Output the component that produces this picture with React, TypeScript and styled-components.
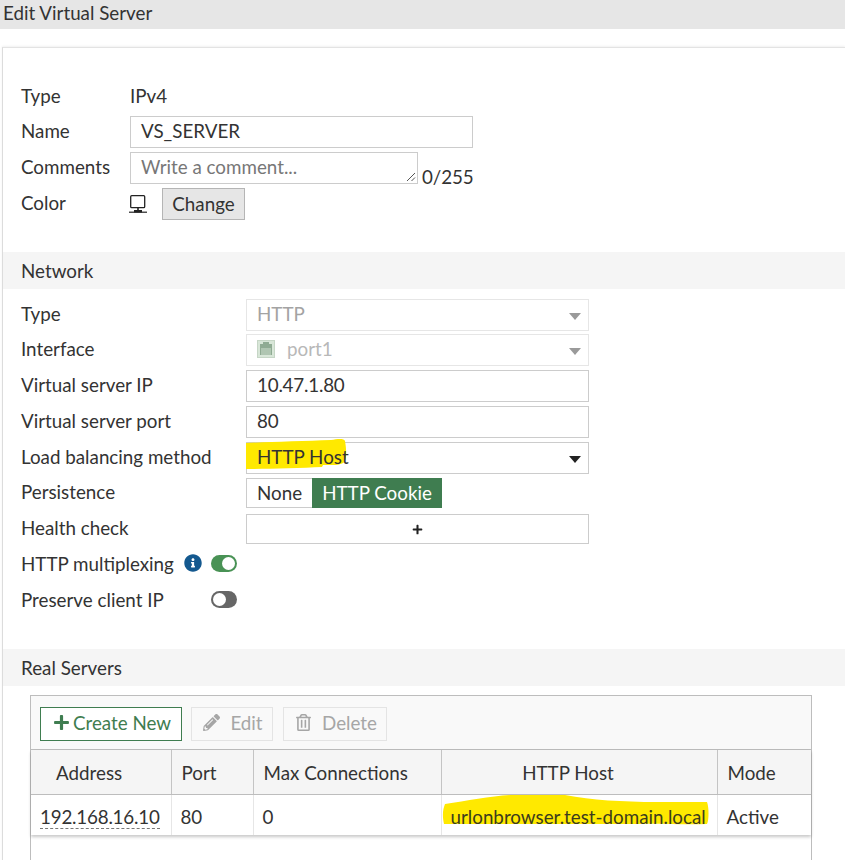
import { ReactNode } from 'react';
import styled, { createGlobalStyle } from 'styled-components';
import { FaInfoCircle, FaPencilAlt, FaPlus, FaRegTrashAlt } from 'react-icons/fa';

const GlobalStyle = createGlobalStyle`
  html, body {
    margin: 0;
    padding: 0;
    background: #fff;
    overflow: hidden;
  }
  body {
    font-family: Lato, "Open Sans", sans-serif;
    font-size: 18.8px;
    color: #333;
  }
  * { box-sizing: border-box; }
`;

const Page = styled.div`
  width: 845px;
  height: 860px;
  overflow: hidden;
`;

const TitleBar = styled.div`
  height: 29px;
  padding-left: 3px;
  background: #e6e6e6;
  line-height: 25px;
  margin-bottom: 18px;
`;

const Panel = styled.div`
  margin-left: 2px;
  border-top: 1px solid #e3e3e3;
  border-left: 1px solid #dcdcdc;
  box-shadow: 0 -1px 2px rgba(0, 0, 0, 0.06);
`;

const Rows = styled.div<{ $top: number; $bottom: number; $gap: number }>`
  display: flex;
  flex-direction: column;
  gap: ${(p) => p.$gap}px;
  padding: ${(p) => p.$top}px 0 ${(p) => p.$bottom}px 18px;
`;

const Row = styled.div<{ $label: number }>`
  display: grid;
  grid-template-columns: ${(p) => p.$label}px 1fr;
  align-items: center;
  height: 32px;
`;

const Label = styled.label`
  display: flex;
  align-items: center;
  padding-bottom: 3px;
  white-space: nowrap;
`;

const StaticLabel = styled(Label)`
  padding-bottom: 1px;
`;

const Value = styled.div`
  display: flex;
  align-items: center;
`;

const SectionHeader = styled.div`
  height: 37px;
  padding-left: 18px;
  background: #f5f5f5;
  line-height: 38px;
`;

const TextBox = styled.div<{ $width: number; $muted?: boolean }>`
  position: relative;
  display: flex;
  align-items: center;
  width: ${(p) => p.$width}px;
  height: 32px;
  padding: 0 10px 3px;
  border: 1px solid ${(p) => (p.$muted ? '#e6e6e6' : '#cccccc')};
  color: ${(p) => (p.$muted ? '#a3a3a3' : '#333')};
  background: #fff;
`;

const Comment = styled(TextBox)`
  color: #777;
`;

const Counter = styled.span`
  margin-left: 4px;
  align-self: flex-end;
  line-height: 20px;
  margin-bottom: -3px;
  letter-spacing: -0.1px;
`;

const Digits = styled.span`
  letter-spacing: -0.2px;
`;

const Grip = styled.svg`
  position: absolute;
  right: 1px;
  bottom: 1px;
  width: 10px;
  height: 10px;
`;

const ChangeButton = styled.div`
  display: flex;
  align-items: center;
  justify-content: center;
  width: 83px;
  height: 32px;
  margin-left: 15px;
  padding-bottom: 1px;
  background: #e6e6e6;
  border: 1px solid #b5b5b5;
`;

const Caret = styled.span<{ $muted?: boolean }>`
  position: absolute;
  right: 7px;
  top: 13px;
  border-left: 6.5px solid transparent;
  border-right: 6.5px solid transparent;
  border-top: 7px solid ${(p) => (p.$muted ? '#9a9a9a' : '#222')};
`;

const PortLabel = styled.span`
  margin-left: 12px;
  color: #b8b8b8;
`;

const Marker = styled.span`
  position: relative;
  z-index: 1;
`;

const HighlightShape = styled.svg`
  position: absolute;
  z-index: 0;
  left: -12px;
  top: -10px;
  width: 106px;
  height: 35px;
`;

const Segments = styled.div`
  display: flex;
  height: 30px;
  border: 1px solid #cccccc;
  border-right: 0;
`;

const Segment = styled.div<{ $active?: boolean }>`
  display: flex;
  align-items: center;
  justify-content: center;
  width: ${(p) => (p.$active ? '130px' : '65px')};
  padding-bottom: 2px;
  background: ${(p) => (p.$active ? '#3f7d50' : '#fff')};
  color: ${(p) => (p.$active ? '#fff' : '#333')};
  margin: ${(p) => (p.$active ? '-1px 0' : '0')};
`;

const AddBox = styled.div`
  display: flex;
  align-items: center;
  justify-content: center;
  width: 343px;
  height: 30px;
  border: 1px solid #cccccc;
  font-size: 11px;
  color: #222;
`;

const InfoIcon = styled(FaInfoCircle)`
  margin-left: 10px;
  font-size: 18px;
  color: #14598f;
`;

const Toggle = styled.span<{ $on?: boolean }>`
  position: absolute;
  left: 190px;
  top: 6px;
  width: 26px;
  height: 17px;
  border-radius: 9px;
  background: ${(p) => (p.$on ? '#499255' : '#666')};

  &::after {
    content: '';
    position: absolute;
    top: 2px;
    left: ${(p) => (p.$on ? '11px' : '2px')};
    width: 13px;
    height: 13px;
    border-radius: 50%;
    background: #fff;
  }
`;

const ToggleRow = styled(Row)`
  position: relative;
`;

const TableFrame = styled.div`
  width: 782px;
  height: 175px;
  margin: 9px 0 0 27px;
  border: 1px solid #bdbdbd;
`;

const Toolbar = styled.div`
  display: flex;
  align-items: center;
  height: 54px;
  padding: 3px 0 0 9px;
  background: #f9f9f9;
  border-bottom: 1px solid #bdbdbd;
`;

const ToolButton = styled.div<{ $width: number; $primary?: boolean }>`
  display: flex;
  align-items: center;
  justify-content: center;
  gap: ${(p) => (p.$primary ? '3px' : '10px')};
  width: ${(p) => p.$width}px;
  height: 34px;
  margin-right: ${(p) => (p.$primary ? '9px' : '10px')};
  padding: 0 0 3px 2px;
  border: 1px solid ${(p) => (p.$primary ? '#3f7d50' : '#e4e4e4')};
  color: ${(p) => (p.$primary ? '#3f7d50' : '#a6a6a6')};
  background: ${(p) => (p.$primary ? '#fff' : 'transparent')};

  svg {
    font-size: 17px;
  }
`;

const Table = styled.table`
  width: 780px;
  table-layout: fixed;
  border-collapse: collapse;
  box-shadow: 0 2px 3px rgba(0, 0, 0, 0.22);
`;

const HeadCell = styled.th<{ $center?: boolean }>`
  height: 45px;
  padding: 0 ${(p) => (p.$center ? '22px' : '0')} 0 ${(p) => (p.$center ? '0' : '10px')};
  background: #f5f5f5;
  border-left: 1px solid #c4c4c4;
  border-bottom: 1px solid #bdbdbd;
  font-weight: 400;
  text-align: ${(p) => (p.$center ? 'center' : 'left')};

  &:first-child {
    border-left: 0;
    padding-left: 25px;
  }
`;

const Cell = styled.td`
  position: relative;
  height: 40px;
  padding: 2px 0 0 9px;
  border-left: 1px solid #e6e6e6;
  white-space: nowrap;

  &:first-child {
    border-left: 0;
  }
`;

const Dotted = styled(Digits)`
  border-bottom: 1px dashed #777;
`;

const HostMark = styled.svg`
  position: absolute;
  left: 0;
  top: 0;
  width: 268px;
  height: 32px;
`;

const HostText = styled.span`
  position: relative;
  color: #3c3c1e;
`;

const DesktopIcon = () => (
  <svg width="18" height="19" viewBox="0 0 18 19" fill="none" style={{ marginLeft: -1 }}>
    <rect x="1.7" y="0.7" width="14" height="12" rx="1" stroke="#222" strokeWidth="1.3" />
    <path d="M9 13v3" stroke="#222" strokeWidth="1.6" />
    <path d="M5 15h8v2.5H5z" fill="#222" />
    <path d="M0 17.2h18" stroke="#222" strokeWidth="1.2" />
  </svg>
);

const PortIcon = () => (
  <svg width="18" height="18" viewBox="0 0 18 18">
    <rect x="0.5" y="0.5" width="17" height="17" fill="#d8e6d8" stroke="#c6d6c6" />
    <path d="M6 2h6v2h3v11H3V4h3z" fill="#8fab93" />
    <path d="M5 8v7M7 8v7M9 8v7M11 8v7M13 8v7" stroke="#d8e6d8" strokeWidth="0.9" />
  </svg>
);

const Field = ({ label, children }: { label: string; children: ReactNode }) => (
  <Row $label={109}>
    <Label>{label}</Label>
    <Value>{children}</Value>
  </Row>
);

const NetField = ({ label, children }: { label: ReactNode; children?: ReactNode }) => (
  <Row $label={225}>
    <Label>{label}</Label>
    <Value>{children}</Value>
  </Row>
);

export default function App() {
  return (
    <Page>
      <GlobalStyle />
      <TitleBar>Edit Virtual Server</TitleBar>
      <Panel>
        <Rows $top={32} $bottom={32} $gap={4}>
          <Row $label={109}>
            <StaticLabel>Type</StaticLabel>
            <StaticLabel>IPv4</StaticLabel>
          </Row>
          <Field label="Name">
            <TextBox $width={343}>VS_SERVER</TextBox>
          </Field>
          <Field label="Comments">
            <Comment $width={288}>
              Write a comment...
              <Grip viewBox="0 0 10 10">
                <path d="M1 9l8-8M5.5 9L9 5.5" stroke="#555" strokeWidth="1" />
              </Grip>
            </Comment>
            <Counter>0/255</Counter>
          </Field>
          <Field label="Color">
            <DesktopIcon />
            <ChangeButton>Change</ChangeButton>
          </Field>
        </Rows>

        <SectionHeader>Network</SectionHeader>
        <Rows $top={9.6} $bottom={32.4} $gap={3.75}>
          <NetField label="Type">
            <TextBox $width={343} $muted>
              HTTP
              <Caret $muted />
            </TextBox>
          </NetField>
          <NetField label="Interface">
            <TextBox $width={343} $muted>
              <PortIcon />
              <PortLabel>port1</PortLabel>
              <Caret $muted />
            </TextBox>
          </NetField>
          <NetField label="Virtual server IP">
            <TextBox $width={343}>
              <Digits>10.47.1.80</Digits>
            </TextBox>
          </NetField>
          <NetField label="Virtual server port">
            <TextBox $width={343}>
              <Digits>80</Digits>
            </TextBox>
          </NetField>
          <NetField label="Load balancing method">
            <TextBox $width={343}>
              <Marker>
                <HighlightShape viewBox="0 0 106 35">
                  <path
                    d="M1 8C20 7 60 6 86 5c6-1 13-2 14 1 1 6 2 14 0 20-1 2-5 4-12 4l-10 0-1 2C55 33 20 34 1 34z"
                    fill="#ffe900"
                  />
                </HighlightShape>
                <Marker>HTTP Host</Marker>
              </Marker>
              <Caret />
            </TextBox>
          </NetField>
          <NetField label="Persistence">
            <Segments>
              <Segment>None</Segment>
              <Segment $active>HTTP Cookie</Segment>
            </Segments>
          </NetField>
          <NetField label="Health check">
            <AddBox>
              <FaPlus />
            </AddBox>
          </NetField>
          <ToggleRow $label={225}>
            <Label>
              HTTP multiplexing
              <InfoIcon />
            </Label>
            <Toggle $on />
          </ToggleRow>
          <ToggleRow $label={225}>
            <Label>Preserve client IP</Label>
            <Toggle />
          </ToggleRow>
        </Rows>

        <SectionHeader>Real Servers</SectionHeader>
        <TableFrame>
          <Toolbar>
            <ToolButton $width={142} $primary>
              <FaPlus />
              Create New
            </ToolButton>
            <ToolButton $width={82}>
              <FaPencilAlt />
              Edit
            </ToolButton>
            <ToolButton $width={104}>
              <FaRegTrashAlt />
              Delete
            </ToolButton>
          </Toolbar>
          <Table>
            <colgroup>
              <col width="140" />
              <col width="82" />
              <col width="188" />
              <col width="276" />
              <col width="94" />
            </colgroup>
            <thead>
              <tr>
                <HeadCell>Address</HeadCell>
                <HeadCell>Port</HeadCell>
                <HeadCell>Max Connections</HeadCell>
                <HeadCell $center>HTTP Host</HeadCell>
                <HeadCell>Mode</HeadCell>
              </tr>
            </thead>
            <tbody>
              <tr>
                <Cell>
                  <Dotted>192.168.16.10</Dotted>
                </Cell>
                <Cell>
                  <Digits>80</Digits>
                </Cell>
                <Cell>0</Cell>
                <Cell>
                  <HostMark viewBox="0 0 268 32">
                    <path
                      d="M3 9C25 6 50 1 70 0h53c27 5 57 7 92 7h50c2 5 2 18 0 22-25 1-50-1-65 0H2C0 20 1 14 3 9z"
                      fill="#ffe900"
                    />
                  </HostMark>
                  <HostText>urlonbrowser.test-domain.local</HostText>
                </Cell>
                <Cell>Active</Cell>
              </tr>
            </tbody>
          </Table>
        </TableFrame>
      </Panel>
    </Page>
  );
}
